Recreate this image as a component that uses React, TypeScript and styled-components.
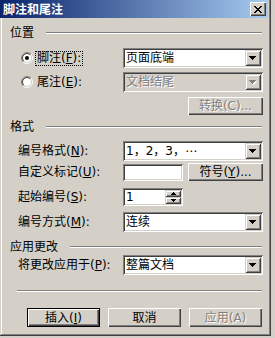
import React from "react";
import styled, { createGlobalStyle, css } from "styled-components";

const GlobalStyle = createGlobalStyle`
  html, body {
    margin: 0;
    padding: 0;
    background: #d4d0c8;
  }
  body {
    font-family: "DejaVu Sans", "Noto Sans CJK SC", sans-serif;
    font-size: 12px;
    color: #000;
  }
`;

const raised = css`
  background: #d4d0c8;
  box-shadow: inset 1px 1px #fff, inset -1px -1px #404040, inset -2px -2px #808080;
`;

const raisedSmall = css`
  background: #d4d0c8;
  box-shadow: inset 1px 1px #d4d0c8, inset -1px -1px #404040, inset 2px 2px #fff,
    inset -2px -2px #808080;
`;

const sunken = css`
  box-shadow: inset 1px 1px #808080, inset -1px -1px #fff, inset 2px 2px #404040,
    inset -2px -2px #d4d0c8;
`;

const disabledText = css`
  color: #808080;
  text-shadow: 1px 1px #fff;
`;

const Window = styled.div`
  width: 271px;
  height: 336px;
  box-sizing: border-box;
  padding: 0 3px 3px 3px;
  background: #d4d0c8;
  box-shadow: inset -1px -1px #404040, inset 1px 0 #d4d0c8, inset -2px -2px #808080,
    inset 2px 0 #fff;
  display: flex;
  flex-direction: column;
`;

const TitleBar = styled.div`
  height: 18px;
  margin-left: -3px;
  padding: 0 2px 0 3px;
  display: flex;
  align-items: center;
  justify-content: space-between;
  background: linear-gradient(to right, #0a246a, #a6caf0);
`;

const Title = styled.span`
  color: #fff;
  font-family: "Noto Sans CJK SC", sans-serif;
  font-weight: bold;
  font-size: 12px;
  line-height: 14px;
`;

const CloseButton = styled.span`
  ${raised};
  width: 16px;
  height: 14px;
  display: flex;
  align-items: center;
  justify-content: center;
`;

const Body = styled.div`
  padding: 8px 5px 0 7px;
  display: flex;
  flex-direction: column;
`;

const GroupHeader = styled.div<{ $top: number }>`
  height: 14px;
  margin-top: ${({ $top }) => $top}px;
  display: flex;
  align-items: center;
  gap: 12px;
  line-height: 14px;
`;

const Rule = styled.div`
  flex: 1;
  margin-right: 1px;
  border-top: 1px solid #808080;
  border-bottom: 1px solid #fff;
`;

const Row = styled.div<{ $top: number; $h: number }>`
  margin-top: ${({ $top }) => $top}px;
  height: ${({ $h }) => $h}px;
  display: grid;
  grid-template-columns: 113px 140px;
  align-items: center;
`;

const FieldLabel = styled.span`
  padding-left: 8px;
  line-height: 14px;
  white-space: nowrap;
`;

const RadioCell = styled.label`
  display: flex;
  align-items: center;
  padding-left: 11px;
`;

const RadioText = styled.span<{ $focus?: boolean }>`
  margin-left: 3px;
  padding: 0 1px;
  line-height: 13px;
  outline: ${({ $focus }) => ($focus ? "1px dotted #000" : "none")};
`;

const Key = styled.span`
  text-decoration: underline;
`;

const Combo = styled.div<{ $disabled?: boolean }>`
  ${sunken};
  box-sizing: border-box;
  height: 20px;
  padding: 2px;
  display: flex;
  align-items: center;
  background: ${({ $disabled }) => ($disabled ? "#d4d0c8" : "#fff")};
`;

const ComboText = styled.span<{ $disabled?: boolean }>`
  flex: 1;
  padding-left: 1px;
  line-height: 16px;
  white-space: nowrap;
  ${({ $disabled }) => $disabled && disabledText};
`;

const DropButton = styled.span`
  ${raisedSmall};
  width: 16px;
  height: 16px;
  display: flex;
  align-items: center;
  justify-content: center;
`;

const Button = styled.span<{ $w: number; $h?: number; $disabled?: boolean; $default?: boolean }>`
  ${raised};
  box-sizing: border-box;
  width: ${({ $w }) => $w}px;
  height: ${({ $h }) => $h ?? 18}px;
  display: flex;
  align-items: center;
  justify-content: center;
  line-height: 14px;
  white-space: nowrap;
  ${({ $disabled }) => $disabled && disabledText};
  ${({ $default }) =>
    $default &&
    css`
      border: 1px solid #000;
    `};
`;

const ControlLine = styled.div`
  display: flex;
  justify-content: space-between;
  align-items: center;
`;

const TextBox = styled.div<{ $w: number }>`
  ${sunken};
  box-sizing: border-box;
  width: ${({ $w }) => $w}px;
  height: 17px;
  background: #fff;
`;

const Spinner = styled.div`
  ${sunken};
  box-sizing: border-box;
  width: 60px;
  height: 18px;
  padding: 2px;
  background: #fff;
  display: flex;
`;

const SpinText = styled.span`
  flex: 1;
  padding-left: 1px;
  line-height: 14px;
`;

const SpinButtons = styled.div`
  width: 16px;
  display: flex;
  flex-direction: column;
`;

const SpinButton = styled.span`
  ${raisedSmall};
  flex: 1;
  display: flex;
  align-items: center;
  justify-content: center;
`;

const Separator = styled.div`
  margin: 15px 1px 0 7px;
  border-top: 1px solid #808080;
  border-bottom: 1px solid #fff;
`;

const ButtonBar = styled.div`
  margin-top: 16px;
  padding-left: 17px;
  display: flex;
  gap: 8px;
`;

const Radio = ({ checked }: { checked?: boolean }) => {
  const d = (r: number) => {
    const o = r * 0.7071;
    return {
      tl: `M${6 - o} ${6 + o}A${r} ${r} 0 0 1 ${6 + o} ${6 - o}`,
      br: `M${6 + o} ${6 - o}A${r} ${r} 0 0 1 ${6 - o} ${6 + o}`,
    };
  };
  const outer = d(5.5);
  const inner = d(4.5);
  return (
    <svg width="12" height="12" viewBox="0 0 12 12">
      <circle cx="6" cy="6" r="4.5" fill="#fff" />
      <path d={outer.tl} stroke="#808080" fill="none" />
      <path d={outer.br} stroke="#fff" fill="none" />
      <path d={inner.tl} stroke="#404040" fill="none" />
      <path d={inner.br} stroke="#d4d0c8" fill="none" />
      {checked && <circle cx="6" cy="6" r="2" fill="#000" />}
    </svg>
  );
};

const DownArrow = ({ disabled }: { disabled?: boolean }) => (
  <svg width="8" height="5" viewBox="0 0 8 5" shapeRendering="crispEdges">
    {disabled && <path d="M1 1h7l-3.5 4z" fill="#fff" />}
    <path d="M0 0h7l-3.5 4z" fill={disabled ? "#808080" : "#000"} />
  </svg>
);

const SmallArrow = ({ up }: { up?: boolean }) => (
  <svg width="5" height="3" viewBox="0 0 5 3" shapeRendering="crispEdges">
    <path d={up ? "M2.5 0L5 3H0z" : "M0 0h5L2.5 3z"} fill="#000" />
  </svg>
);

const CloseGlyph = () => (
  <svg width="8" height="7" viewBox="0 0 8 7" shapeRendering="crispEdges">
    <path
      d="M0 0h2v1H0zM6 0h2v1H6zM1 1h2v1H1zM5 1h2v1H5zM2 2h4v1H2zM3 3h2v1H3zM2 4h4v1H2zM1 5h2v1H1zM5 5h2v1H5zM0 6h2v1H0zM6 6h2v1H6z"
      fill="#000"
    />
  </svg>
);

const ComboBox = ({ value, disabled }: { value: string; disabled?: boolean }) => (
  <Combo $disabled={disabled}>
    <ComboText $disabled={disabled}>{value}</ComboText>
    <DropButton>
      <DownArrow disabled={disabled} />
    </DropButton>
  </Combo>
);

export default function App() {
  return (
    <>
      <GlobalStyle />
      <Window>
        <TitleBar>
          <Title>脚注和尾注</Title>
          <CloseButton>
            <CloseGlyph />
          </CloseButton>
        </TitleBar>
        <Body>
          <GroupHeader $top={0}>
            位置
            <Rule />
          </GroupHeader>
          <Row $top={8} $h={20}>
            <RadioCell>
              <Radio checked />
              <RadioText $focus>
                脚注(<Key>F</Key>):
              </RadioText>
            </RadioCell>
            <ComboBox value="页面底端" />
          </Row>
          <Row $top={4} $h={20}>
            <RadioCell>
              <Radio />
              <RadioText>
                尾注(<Key>E</Key>):
              </RadioText>
            </RadioCell>
            <ComboBox value="文档结尾" disabled />
          </Row>
          <Row $top={5} $h={18}>
            <span />
            <ControlLine>
              <span />
              <Button $w={75} $disabled>
                转换(C)...
              </Button>
            </ControlLine>
          </Row>

          <GroupHeader $top={5}>
            格式
            <Rule />
          </GroupHeader>
          <Row $top={7} $h={20}>
            <FieldLabel>
              编号格式(<Key>N</Key>):
            </FieldLabel>
            <ComboBox value="1，2，3，⋯" />
          </Row>
          <Row $top={2} $h={18}>
            <FieldLabel>
              自定义标记(<Key>U</Key>):
            </FieldLabel>
            <ControlLine>
              <TextBox $w={60} />
              <Button $w={75}>
                符号(<Key>Y</Key>)...
              </Button>
            </ControlLine>
          </Row>
          <Row $top={7} $h={18}>
            <FieldLabel>
              起始编号(<Key>S</Key>):
            </FieldLabel>
            <Spinner>
              <SpinText>1</SpinText>
              <SpinButtons>
                <SpinButton>
                  <SmallArrow up />
                </SpinButton>
                <SpinButton>
                  <SmallArrow />
                </SpinButton>
              </SpinButtons>
            </Spinner>
          </Row>
          <Row $top={6} $h={20}>
            <FieldLabel>
              编号方式(<Key>M</Key>):
            </FieldLabel>
            <ComboBox value="连续" />
          </Row>

          <GroupHeader $top={8}>
            应用更改
            <Rule />
          </GroupHeader>
          <Row $top={1} $h={20}>
            <FieldLabel>
              将更改应用于(<Key>P</Key>):
            </FieldLabel>
            <ComboBox value="整篇文档" />
          </Row>

          <Separator />
          <ButtonBar>
            <Button $w={73} $h={19} $default>
              插入(<Key>I</Key>)
            </Button>
            <Button $w={73} $h={19}>
              取消
            </Button>
            <Button $w={73} $h={19} $disabled>
              应用(A)
            </Button>
          </ButtonBar>
        </Body>
      </Window>
    </>
  );
}
